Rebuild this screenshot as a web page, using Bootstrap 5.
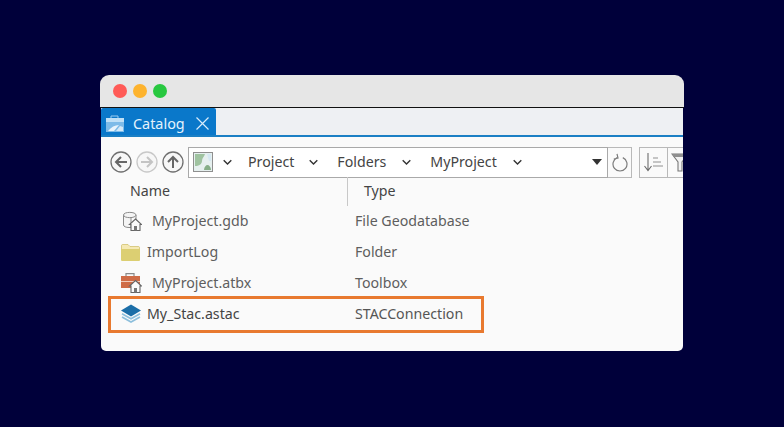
<!DOCTYPE html>
<html lang="en">
<head>
<meta charset="utf-8">
<title>Catalog</title>
<link href="https://cdn.jsdelivr.net/npm/bootstrap@5.3.0/dist/css/bootstrap.min.css" rel="stylesheet">
<style>
html,body{height:100%}
body{background:#00003a;font-family:"Noto Sans","Open Sans",sans-serif;overflow:hidden;font-size:14.2px;color:#555}
.stage{width:784px;height:427px;padding:75px 100px 76px 100px}
.win{width:584px;height:276px}
.titlebar{height:33px;background:#e6e6e6;border-bottom:1px solid #111;padding-left:13px;gap:6px;border-radius:9px 9px 0 0;flex:none}
.dot{width:14px;height:14px;border-radius:50%}
.d-red{background:#ff5b57}.d-amber{background:#fdb32e}.d-green{background:#28c840}
.winbody{margin:0 1px;background:#fafafa;border-radius:0 0 5px 5px;overflow:hidden;flex:1}
.tabrow{height:29px;background:#eef0f3;border-bottom:2px solid #1b7fc4}
.cattab{width:115px;height:27px;background:#0a78ca;color:#e4f2fc;padding:3px 0 0 5px;border-radius:2px 2px 0 0;line-height:1;font-size:14.4px}
.cattab span{margin:2px 11px 0 9px}
.toolbar{height:30px;margin-top:10px;padding-left:9px}
.navic{width:22px;height:22px;flex:none;margin-right:4px}
.crumb{width:420px;height:31px;background:#fff;border:1px solid #a9a9a9;padding:0 5px 0 4px;flex:none}
.crumbtxt{color:#444}
.cv{flex:none;width:9px;height:7px}
.m10{margin-left:10px}.m15{margin-left:15px}.m16{margin-left:16px}.m19{margin-left:19px}
.sq{height:31px;border:1px solid #b9b9b9;background:#fafafa;flex:none}
.sq-ref{width:24px;border-left:0}
.sq-sort{width:29px;margin-left:7px}
.sq-fil{width:15px;border-left:0;border-right:0;padding-left:3px;overflow:hidden}
.hdr{height:29px;padding-left:29px;color:#444}
.hname{width:217px;height:29px;padding-bottom:2px}
.hsep{width:1px;height:29px;background:#c8c8c8;flex:none}
.htype{margin:0 0 2px 16px}
.frow{height:31px;color:#5e5e5e}
.fname{width:254px;flex:none;padding-left:20px}
.fname span,.fname + div{margin-bottom:2px}
.ficon{margin-right:10px;flex:none}
.ficon2{margin-right:7px;flex:none}
.ficon3{margin-right:6px;flex:none}
.hilite{width:376px;height:37px;border:3px solid #e8792f;margin:-3px 0 0 7px;flex:none}
.hilite .fname{width:244px;padding-left:10px}
.stacname{color:#444}
</style>
</head>
<body>
<div class="stage">
<div class="win d-flex flex-column">
 <div class="titlebar d-flex align-items-center">
  <span class="dot d-red"></span><span class="dot d-amber"></span><span class="dot d-green"></span>
 </div>
 <div class="winbody">
 <div class="tabrow d-flex">
  <div class="cattab d-flex align-items-center">
   <svg width="18" height="17" viewBox="0 0 18 17"><path d="M5 3V1h7v2" fill="none" stroke="#9ccdf0"/><rect y="3" width="18" height="14" fill="#7dbbe8"/><rect y="3" width="18" height="4" fill="#bfe0f6"/><path d="M2 16c3-4 7-6 11-6l-5 6z" fill="#e8f4fc"/><path d="M10 16l4-5 3 1v4z" fill="#d3e9f8"/></svg>
   <span>Catalog</span>
   <svg width="13" height="13" viewBox="0 0 13 13"><path d="M.5.5l12 12M12.500.5l-12 12" stroke="#d8ecfc" stroke-width="1.200"/></svg>
  </div>
 </div>
 <div class="toolbar d-flex align-items-center">
  <svg class="navic" viewBox="0 0 22 22"><circle cx="11" cy="11" r="10" fill="#f7f7f7" stroke="#707070" stroke-width="1.300"/><path d="M17 11H6M11 6l-5 5 5 5" fill="none" stroke="#666" stroke-width="2"/></svg>
  <svg class="navic" viewBox="0 0 22 22"><circle cx="11" cy="11" r="10" fill="#f7f7f7" stroke="#c8c8c8" stroke-width="1.300"/><path d="M5 11h11M11 6l5 5-5 5" fill="none" stroke="#c4c4c4" stroke-width="2"/></svg>
  <svg class="navic" viewBox="0 0 22 22"><circle cx="11" cy="11" r="10" fill="#f7f7f7" stroke="#707070" stroke-width="1.300"/><path d="M11 17V6M6 11l5-5 5 5" fill="none" stroke="#666" stroke-width="2"/></svg>
  <div class="crumb d-flex align-items-center">
   <svg class="flex-shrink-0" width="20" height="20" viewBox="0 0 20 20"><rect x=".5" y=".5" width="19" height="19" fill="#e6f0ef" stroke="#8f8f8f"/><path d="M2 2h10c-1 3-3 4-3 7s-3 5-7 5z" fill="#9fc3a0"/><path d="M11 18c0-3 2-5 3.500-5s3.500 2 3.500 5z" fill="#86ae88"/><path d="M14 2h4v7h-2z" fill="#d5e8f2"/></svg>
   <svg class="cv m10" viewBox="0 0 9 7"><path d="M.7 1.200l3.800 3.800 3.800-3.800" fill="none" stroke="#333" stroke-width="1.400"/></svg>
   <span class="crumbtxt m16">Project</span>
   <svg class="cv m15" viewBox="0 0 9 7"><path d="M.7 1.200l3.800 3.800 3.800-3.800" fill="none" stroke="#333" stroke-width="1.400"/></svg>
   <span class="crumbtxt m19">Folders</span>
   <svg class="cv m16" viewBox="0 0 9 7"><path d="M.7 1.200l3.800 3.800 3.800-3.800" fill="none" stroke="#333" stroke-width="1.400"/></svg>
   <span class="crumbtxt m19">MyProject</span>
   <svg class="cv m16" viewBox="0 0 9 7"><path d="M.7 1.200l3.800 3.800 3.800-3.800" fill="none" stroke="#333" stroke-width="1.400"/></svg>
   <svg class="ms-auto" width="10" height="6" viewBox="0 0 10 6"><path d="M0 0h10L5 6z" fill="#333"/></svg>
  </div>
  <div class="sq sq-ref d-flex align-items-center justify-content-center">
   <svg width="16" height="19" viewBox="0 0 16 19"><path d="M5.200 4.600a7 7 0 1 0 5.600 0M5 .8l1 4.200-4.200 1" fill="none" stroke="#7c7c7c" stroke-width="1.200"/></svg>
  </div>
  <div class="sq sq-sort d-flex align-items-center justify-content-center">
   <svg width="21" height="20" viewBox="0 0 21 20"><path d="M5 1v17M1.500 14L5 18.500 8.500 14" fill="none" stroke="#6c6c6c" stroke-width="1.100"/><path d="M10 6h5M10 10h8M10 14h10" stroke="#8f8f8f" stroke-width="1.100"/></svg>
  </div>
  <div class="sq sq-fil d-flex align-items-center">
   <svg class="flex-shrink-0" width="18" height="20" viewBox="0 0 18 20"><path d="M1 2h16l-6 8v9H7v-9z" fill="#f2f2f2" stroke="#777" stroke-width="1.100"/><path d="M1 2h16l-2 3H3z" fill="#8f8f8f"/></svg>
  </div>
 </div>
 <div class="hdr d-flex align-items-center">
  <div class="hname d-flex align-items-center">Name</div>
  <div class="hsep"></div>
  <div class="htype">Type</div>
 </div>
 <div>
  <div class="frow d-flex align-items-center">
   <div class="fname d-flex align-items-center">
    <svg class="ficon" width="21" height="20" viewBox="0 0 21 20"><path d="M2.500 4v10c0 1.500 2.500 2.500 5.500 2.500h2V4" fill="#f4f4f4" stroke="#8a8a8a"/><path d="M15 4v5" stroke="#8a8a8a"/><path d="M2.500 4c0 3.500 12.500 3.500 12.500 0 0-3.500-12.500-3.500-12.500 0z" fill="#f4f4f4" stroke="#8a8a8a"/><path d="M14.500 8l6 5.500h-1.500v6H10v-6H8.500z" fill="#fafafa" stroke="#666" stroke-width="1.100"/><path d="M13 15h3v4.500h-3z" fill="#777"/></svg>
    <span>MyProject.gdb</span>
   </div>
   <div>File Geodatabase</div>
  </div>
  <div class="frow d-flex align-items-center">
   <div class="fname d-flex align-items-center">
    <svg class="ficon2" width="19" height="17" viewBox="0 0 19 17"><path d="M.5 3V1.500C.5 1 1 .5 1.500.5H7l2 2h8.500c.5 0 1 .5 1 1V6H.5z" fill="#f5e9b4" stroke="#cdbb62" stroke-width=".7"/><path d="M0 5h19v10.500c0 1-.5 1.500-1.500 1.500h-16C.5 17 0 16.500 0 15.500z" fill="#dccf72"/></svg>
    <span>ImportLog</span>
   </div>
   <div>Folder</div>
  </div>
  <div class="frow d-flex align-items-center">
   <div class="fname d-flex align-items-center">
    <svg class="ficon" width="21" height="20" viewBox="0 0 21 20"><path d="M5 3V.7h8V3" fill="none" stroke="#8a8a8a" stroke-width="1.200"/><rect y="3" width="19" height="12" fill="#cf6c47"/><path d="M0 8.500h19" stroke="#f0cdbd"/><path d="M14.500 7.500l6 5.500h-1.500v6.500H10V13H8.500z" fill="#fafafa" stroke="#666" stroke-width="1.100"/><path d="M13 15h3v4.500h-3z" fill="#777"/></svg>
    <span>MyProject.atbx</span>
   </div>
   <div>Toolbox</div>
  </div>
  <div class="hilite d-flex align-items-center">
   <div class="fname d-flex align-items-center">
    <svg class="ficon3" width="20" height="20" viewBox="0 0 20 20"><path d="M1 13l9 5 9-5" fill="none" stroke="#8dbfdc" stroke-width="1.600"/><path d="M1 9.800l9 5 9-5" fill="none" stroke="#8dbfdc" stroke-width="1.600"/><path d="M0 6.500L10 .5l10 6-10 6z" fill="#1b6ea8"/></svg>
    <span class="stacname">My_Stac.astac</span>
   </div>
   <div>STACConnection</div>
  </div>
 </div>
 </div>
</div>
</div>
<script src="https://cdn.jsdelivr.net/npm/bootstrap@5.3.0/dist/js/bootstrap.bundle.min.js"></script>
</body>
</html>
